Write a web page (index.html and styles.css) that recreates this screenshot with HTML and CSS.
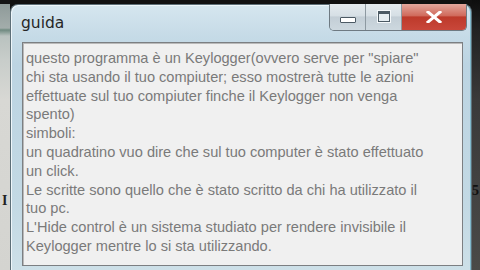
FILE: index.html
```html
<!DOCTYPE html>
<html>
<head>
<meta charset="utf-8">
<link rel="stylesheet" href="styles.css">
</head>
<body>
<div class="desk">
  <span class="bg-glyph bg-left">I</span>
  <span class="bg-glyph bg-right">5</span>
  <div class="window">
    <div class="titlebar">
      <span class="title">guida</span>
      <div class="controls">
        <div class="btn btn-min"><span class="min-bar"></span></div>
        <div class="btn btn-max"><span class="max-box"></span></div>
        <div class="btn btn-close">
          <svg width="16" height="12" viewBox="0 0 16 12"><path d="M2 1 L14 11 M14 1 L2 11" stroke="#fff" stroke-width="3" stroke-linecap="square" fill="none"/></svg>
        </div>
      </div>
    </div>
    <div class="textbox">
      <div class="line">questo programma è un Keylogger(ovvero serve per "spiare"</div>
      <div class="line">chi sta usando il tuo compiuter; esso mostrerà tutte le azioni</div>
      <div class="line">effettuate sul tuo compiuter finche il Keylogger non venga</div>
      <div class="line">spento)</div>
      <div class="line">simboli:</div>
      <div class="line">un quadratino vuo dire che sul tuo computer è stato effettuato</div>
      <div class="line">un click.</div>
      <div class="line">Le scritte sono quello che è stato scritto da chi ha utilizzato il</div>
      <div class="line">tuo pc.</div>
      <div class="line">L'Hide control è un sistema studiato per rendere invisibile il</div>
      <div class="line">Keylogger mentre lo si sta utilizzando.</div>
    </div>
  </div>
</div>
</body>
</html>
```
FILE: styles.css
```css
html, body {
  margin: 0;
  padding: 0;
}
body {
  width: 480px;
  height: 270px;
  overflow: hidden;
  background: #1c1c1c;
  font-family: "Liberation Sans", Arial, sans-serif;
}
.desk {
  position: relative;
  width: 480px;
  height: 270px;
  padding: 4px 8px 0 10px;
  box-sizing: border-box;
  background:
    linear-gradient(to bottom, #151515 0, #151515 4px, #8e9a99 4px, #a3adab 28px, #6f8a80 30px, #b9c2bf 36px, #c8cdca 60px, #d8d8d4 100px, #d4d4d0 270px) left top / 10px 100% no-repeat,
    linear-gradient(to bottom, #0e0e0e 0, #222 30px, #3a3a3a 100px, #4a4a48 270px) right top / 8px 100% no-repeat,
    #111;
}
.bg-glyph {
  position: absolute;
  font-family: "Liberation Serif", serif;
  font-weight: bold;
  font-size: 14px;
  color: #222;
}
.bg-left { left: 2px; top: 193px; }
.bg-right { right: 1px; top: 183px; color: #111; }
.window {
  width: 462px;
  height: 266px;
  border-radius: 8px 8px 0 0;
  background: linear-gradient(to bottom, #d5e6ef 0, #c6dbe7 30px, #bcd4e2 60px, #c3d9e4 200px, #cde0e8 266px);
  box-shadow: inset 1px 1px 0 #eef6fa, inset -1px 0 0 #7fb9cc;
  border: 1px solid #5d6f78;
  border-bottom: none;
  box-sizing: border-box;
  display: flex;
  flex-direction: column;
  padding: 0 8px 0 11px;
}
.titlebar {
  height: 37px;
  display: flex;
  align-items: flex-start;
  justify-content: space-between;
  flex-shrink: 0;
}
.title {
  font-family: "DejaVu Sans", sans-serif;
  font-size: 15.5px;
  color: #262626;
  margin-top: 9px;
  margin-left: -1px;
}
.controls {
  display: flex;
  margin-top: -1px;
  margin-right: -4px;
  height: 26px;
  border: 1px solid #6e7a82;
  border-top: none;
  border-radius: 0 0 5px 5px;
  overflow: hidden;
}
.btn {
  height: 26px;
  display: flex;
  align-items: center;
  justify-content: center;
  box-sizing: border-box;
}
.btn-min, .btn-max {
  background: linear-gradient(to bottom, #e4ebef 0, #d6dfe5 45%, #c3ced6 50%, #cdd8df 100%);
  border-right: 1px solid #8d99a1;
}
.btn-min { width: 36px; }
.btn-max { width: 36px; }
.btn-close {
  width: 64px;
  background: linear-gradient(to bottom, #e3a79d 0, #d06a5c 45%, #bd3a2b 50%, #c9473a 100%);
}
.min-bar {
  width: 14px;
  height: 4px;
  border: 1px solid #4c5a64;
  background: #fff;
  border-radius: 1px;
  margin-top: 6px;
}
.max-box {
  width: 10px;
  height: 7px;
  border: 1px solid #4c5a64;
  border-top-width: 3px;
  background: #e7eef2;
  box-shadow: 0 0 0 1px #f4f8fa;
  margin-top: -1px;
}
.textbox {
  flex: 1;
  margin-bottom: 4px;
  background: #f0f0f0;
  border: 1px solid #7c7f82;
  box-shadow: inset 1px 1px 0 #b9b9b9;
  padding: 6px 3px 0 3px;
  font-size: 14.6px;
  line-height: 18.8px;
  color: #7a7a7a;
  white-space: nowrap;
  overflow: hidden;
}
```
